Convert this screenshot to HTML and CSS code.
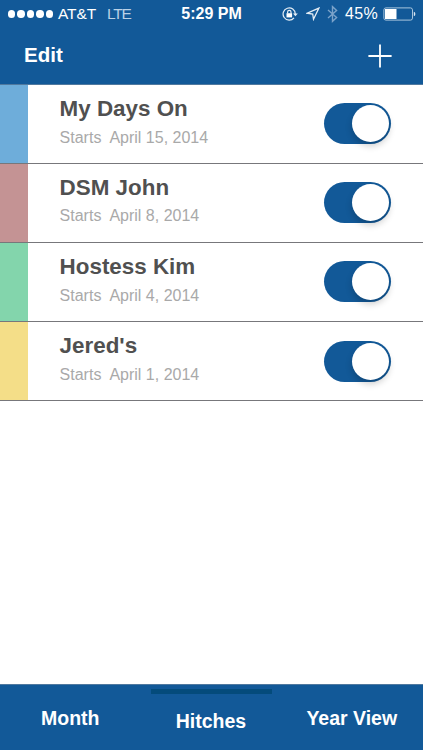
FILE: index.html
```html
<!DOCTYPE html>
<html lang="en">
<head>
    <meta charset="UTF-8">
    <meta name="viewport" content="width=device-width, initial-scale=1.0">
    <title>Hitches</title>
    <link rel="stylesheet" href="styles.css">
</head>
<body>
    <div class="app">
        <header class="header">
            <div class="status-bar">
                <div class="status-left">
                    <div class="signal"><i></i><i></i><i></i><i></i><i></i></div>
                    <span class="carrier">AT&amp;T</span>
                    <span class="network">LTE</span>
                </div>
                <span class="time">5:29 PM</span>
                <div class="status-right">
                    <svg class="icon-lock" width="17" height="14" viewBox="0 0 17 14" fill="none" stroke="#e4edf5" stroke-width="1.2">
                        <path d="M12 10.8A6.1 6.1 0 1 1 13.3 7"/>
                        <path d="M11 6.4h4.8l-2.4 2.8z" fill="#e4edf5" stroke="none"/>
                        <rect x="4.5" y="6.2" width="5.6" height="4.2" fill="#fff" stroke="none"/>
                        <path d="M5.6 6.5V5a1.7 1.7 0 0 1 3.4 0v1.5"/>
                    </svg>
                    <svg class="icon-location" width="14" height="14" viewBox="0 0 14 14" fill="none" stroke="#e4edf5" stroke-width="1.3">
                        <path d="M12.8 1.2L1.3 6.2l5.4.8.8 5.2z"/>
                    </svg>
                    <svg class="icon-bluetooth" width="11" height="18" viewBox="0 0 11 18" fill="none" stroke="#7ba3ca" stroke-width="1.4">
                        <path d="M1 5l8.6 7.5-4.1 3.8V1.7l4.1 3.8L1 13"/>
                    </svg>
                    <span class="percent">45%</span>
                    <svg class="icon-battery" width="33" height="14" viewBox="0 0 33 14">
                        <rect x=".9" y=".9" width="28.6" height="12.2" rx="2" fill="none" stroke="#a9c5de"/>
                        <path d="M2 2h11.5v10H2z" fill="#fff"/>
                        <path d="M30.8 4.7q1.6.5 1.6 2.3t-1.6 2.3z" fill="#dce8f2"/>
                    </svg>
                </div>
            </div>
            <nav class="nav-bar">
                <span class="edit">Edit</span>
                <svg width="24" height="24" viewBox="0 0 24 24" stroke="#fff" stroke-width="1.8">
                    <path d="M12 .4v23.2M.4 12h23.2"/>
                </svg>
            </nav>
        </header>

        <main class="list">
            <div class="row">
                <div class="color blue"></div>
                <div class="info">
                    <h2>My Days On</h2>
                    <p>Starts&nbsp; April 15, 2014</p>
                </div>
                <div class="toggle"><div class="knob"></div></div>
            </div>
            <div class="row">
                <div class="color red"></div>
                <div class="info">
                    <h2>DSM John</h2>
                    <p>Starts&nbsp; April 8, 2014</p>
                </div>
                <div class="toggle"><div class="knob"></div></div>
            </div>
            <div class="row">
                <div class="color green"></div>
                <div class="info">
                    <h2>Hostess Kim</h2>
                    <p>Starts&nbsp; April 4, 2014</p>
                </div>
                <div class="toggle"><div class="knob"></div></div>
            </div>
            <div class="row">
                <div class="color yellow"></div>
                <div class="info">
                    <h2>Jered's</h2>
                    <p>Starts&nbsp; April 1, 2014</p>
                </div>
                <div class="toggle"><div class="knob"></div></div>
            </div>
        </main>

        <footer class="tabs">
            <div class="tab">Month</div>
            <div class="tab active">Hitches</div>
            <div class="tab">Year View</div>
        </footer>
    </div>
</body>
</html>
```
FILE: styles.css
```css
* {
    box-sizing: border-box;
}
body {
    margin: 0;
    font-family: "Liberation Sans", Arial, sans-serif;
    background: #fff;
    overflow: hidden;
}
svg {
    display: block;
}
.app {
    display: flex;
    flex-direction: column;
    height: 750px;
}
.header {
    height: 85px;
    background: #125998;
    color: #fff;
    border-bottom: 1px solid #50799f;
}
.status-bar {
    display: grid;
    grid-template-columns: 1fr auto 1fr;
    align-items: center;
    height: 28px;
    padding: 0 7px 0 8px;
    font-size: 15.5px;
    line-height: 28px;
}
.status-left,
.status-right {
    display: flex;
    align-items: center;
}
.status-right {
    justify-content: flex-end;
}
.signal {
    display: flex;
    gap: 2px;
    margin-right: 5px;
}
.signal i {
    width: 7.4px;
    height: 7.4px;
    border-radius: 50%;
    background: #fff;
}
.carrier {
    width: 49px;
    letter-spacing: -0.1px;
}
.network {
    color: #b9d1e6;
    letter-spacing: -1.2px;
}
.time {
    margin-left: -1px;
    font-weight: bold;
    font-size: 16px;
}
.icon-lock {
    margin-right: 7px;
}
.icon-location {
    margin-right: 7px;
}
.icon-bluetooth {
    margin-right: 7px;
}
.percent {
    margin-right: 5px;
    font-size: 16px;
    letter-spacing: 0.3px;
}
.nav-bar {
    display: flex;
    justify-content: space-between;
    align-items: center;
    height: 56px;
    padding: 0 31px 1px 24px;
}
.edit {
    padding-bottom: 1px;
    font-size: 20.5px;
    font-weight: bold;
}
.list {
    flex: 1;
}
.row {
    display: flex;
    align-items: center;
    height: 79.2px;
    padding-right: 32px;
    border-bottom: 1px solid #77777b;
}
.row:first-child {
    height: 78.6px;
}
.color {
    align-self: stretch;
    width: 28px;
    margin-right: 31.6px;
}
.blue {
    background: #6eadda;
}
.red {
    background: #c49394;
}
.green {
    background: #83d5ac;
}
.yellow {
    background: #f4de88;
}
.info {
    flex: 1;
    padding-bottom: 3px;
}
.info h2 {
    margin: 0;
    font-size: 22.4px;
    line-height: 28px;
    color: #505050;
}
.info p {
    margin: 2.6px 0 0;
    font-size: 16px;
    line-height: 24px;
    color: #a9a9a9;
}
.toggle {
    display: flex;
    justify-content: flex-end;
    width: 67.5px;
    height: 41px;
    padding: 2px;
    border-radius: 21px;
    background: #125998;
}
.knob {
    width: 37px;
    height: 37px;
    border-radius: 50%;
    background: #fff;
    box-shadow: 0 4px 7px rgba(0, 0, 0, 0.2);
}
.tabs {
    display: flex;
    height: 66px;
    padding-right: 1px;
    border-top: 1px solid #50799f;
    background: #125998;
    color: #fff;
    font-size: 19.5px;
    font-weight: bold;
    line-height: 67px;
    text-align: center;
}
.tab {
    flex: 1;
}
.active {
    flex: 0 0 121px;
    height: 5px;
    margin: 4px 10px 0;
    background: #044b7b;
    line-height: 65px;
}
```
